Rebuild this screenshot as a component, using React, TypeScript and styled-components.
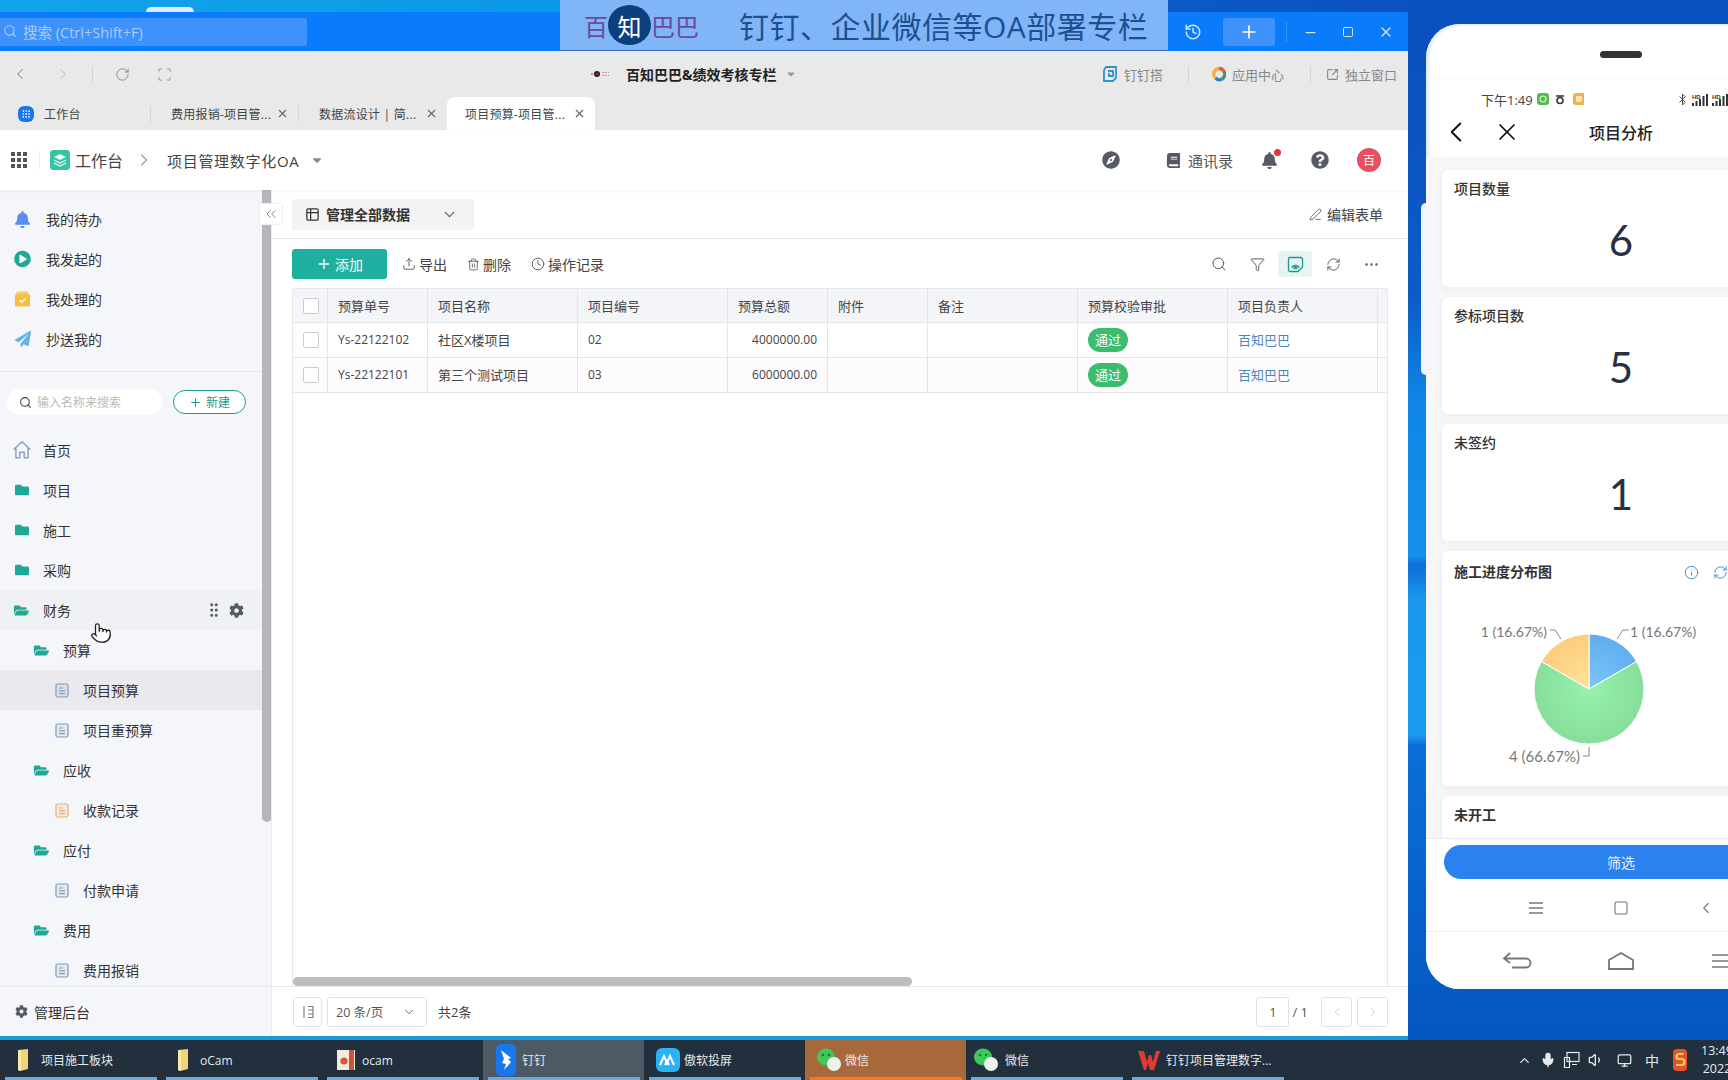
import React from "react";
import styled, { createGlobalStyle } from "styled-components";
import {
  ChevronLeft, ChevronRight, ChevronDown, ChevronsLeft, RotateCw, Scan, X, Minus, Square, Plus, History,
  Search, Table2, PenLine, Upload, Trash2, Clock, Filter, RefreshCw, MoreHorizontal, SquareArrowOutUpRight,
  Info, Mic, Volume1, Monitor, ChevronUp, Pointer, Grip, GripVertical, Bluetooth,
} from "lucide-react";
import { FaCog, FaBell, FaCompass, FaQuestionCircle, FaFolder, FaFolderOpen, FaPaperPlane, FaPlayCircle, FaCaretDown, FaBook } from "react-icons/fa";

const FONT = `"Open Sans", "Noto Sans CJK SC", sans-serif`;

const Global = createGlobalStyle`
  html, body { margin: 0; padding: 0; width: 1728px; height: 1080px; overflow: hidden; }
  * { box-sizing: border-box; }
  body { font-family: ${FONT}; color: #333; }
`;

const Page = styled.div`
  width: 1728px; height: 1080px; overflow: hidden; display: flex; flex-direction: column;
  background: linear-gradient(180deg, #0a4fbe 0, #0a5cc8 300px, #0f86e6 400px, #1590ea 555px, #0e6fd8 565px, #1a97ee 600px, #1a9bef 735px, #0a6fd8 745px, #0656c0 1040px);
`;
const Desktop = styled.div`height: 1040px; display: flex; position: relative; flex-shrink: 0;`;
const Window = styled.div`width: 1408px; height: 1040px; display: flex; flex-direction: column; flex-shrink: 0;`;
const WallStrip = styled.div`
  height: 12px; flex-shrink: 0; display: flex; align-items: flex-end; padding-left: 146px;
  background: linear-gradient(90deg, #12a4ea 0, #0a98e8 40%, #0a5ac6 83%, #0a52c0 100%);
`;
const WallTab = styled.div`width: 48px; height: 5px; background: #dfeefa; border-radius: 6px 6px 0 0;`;
const TitleBar = styled.div`height: 39px; flex-shrink: 0; background: #0a7bfb; display: flex; align-items: flex-start; padding-top: 6px; justify-content: space-between; padding-right: 3px;`;
const SearchBox = styled.div`
  width: 307px; height: 28px; background: #3f92fb; border-radius: 0 3px 3px 0; display: flex; align-items: center; gap: 6px;
  color: #a9cdfb; font-size: 14.5px; padding: 0 0 2px 3px;
`;
const Controls = styled.div`display: flex; align-items: center; height: 28px; color: #cfe4fe;`;
const CtrlCell = styled.div`width: 38px; height: 28px; display: flex; align-items: center; justify-content: center;`;
const PlusBox = styled.div`width: 52px; height: 28px; margin: 0 11px; background: #3f92fb; border-radius: 3px; display: flex; align-items: center; justify-content: center; color: #fff;`;
const CtrlDivider = styled.div`width: 1px; height: 20px; background: #3a94fb; margin-right: 4px;`;

const AddressBar = styled.div`height: 46px; flex-shrink: 0; background: #e9e9e9; display: flex; align-items: center; padding-right: 11px;`;
const NavCell = styled.div<{ $w: number; $faint?: boolean }>`width: ${(p) => p.$w}px; display: flex; justify-content: center; color: ${(p) => (p.$faint ? "#b9b9b9" : "#777")};`;
const VDivider = styled.div<{ $h?: number; $ml?: number; $mr?: number; $c?: string }>`
  width: 1px; height: ${(p) => p.$h ?? 16}px; background: ${(p) => p.$c ?? "#d4d4d4"}; margin-left: ${(p) => p.$ml ?? 0}px; margin-right: ${(p) => p.$mr ?? 0}px; flex-shrink: 0;
`;
const AddrTitle = styled.div`display: flex; align-items: center; margin-left: 406px; font-size: 14px; font-weight: 700; color: #222; width: 210px;`;
const OrgLogo = styled.svg`margin-right: 14px; flex-shrink: 0;`;
const AddrCaret = styled.span`color: #999; margin-left: 8px; display: flex;`;
const AddrRight = styled.div`margin-left: auto; display: flex; align-items: center; font-size: 13px; color: #888;`;
const AddrLink = styled.div`display: flex; align-items: center; gap: 6px;`;

const TabBar = styled.div`height: 33px; flex-shrink: 0; background: #e9e9e9; display: flex; align-items: center;`;
const Tab = styled.div<{ $w: number; $active?: boolean }>`
  width: ${(p) => p.$w}px; height: 33px; display: flex; align-items: center; justify-content: space-between;
  padding: 0 9px 0 ${(p) => (p.$active ? 18 : 20)}px; font-size: 12px; letter-spacing: .25px; color: #444; white-space: nowrap;
  ${(p) => (p.$active ? "background:#fff;border-radius:8px 8px 0 0;" : "")}
`;
const HomeTab = styled(Tab)`justify-content: flex-start; gap: 10px; padding-left: 18px;`;
const TabIcon = styled.span`width: 16px; height: 16px; border-radius: 6px; background: #1677ee; display: flex; align-items: center; justify-content: center; color: #fff;`;
const TabClose = styled.span`display: flex; color: #666;`;

const AppHeader = styled.div`height: 60px; flex-shrink: 0; background: #fff; display: flex; align-items: center; padding: 0 27px 0 11px; box-shadow: 0 1px 3px rgba(0,0,0,.05); position: relative; z-index: 1;`;
const GridIcon = styled.div`width: 16px; height: 16px; display: grid; grid-template-columns: repeat(3, 4px); gap: 2px; margin-right: 12px;`;
const GridDot = styled.span`background: #555; width: 4px; height: 4px;`;
const Crumb = styled.span<{ $size: number; $ml: number; $ls?: number }>`font-size: ${(p) => p.$size}px; margin-left: ${(p) => p.$ml}px; letter-spacing: ${(p) => p.$ls ?? 0}px; color: #444; white-space: nowrap;`;
const CrumbIcon = styled.span<{ $ml: number; $c?: string }>`display: flex; margin-left: ${(p) => p.$ml}px; color: ${(p) => p.$c ?? "#999"};`;
const HeadRight = styled.div`margin-left: auto; display: flex; align-items: center; color: #555a66;`;
const HeadItem = styled.span<{ $ml?: number }>`display: flex; align-items: center; margin-left: ${(p) => p.$ml ?? 0}px; position: relative;`;
const HeadText = styled.span`font-size: 15px; color: #555; margin-left: 7px;`;
const RedDot = styled.span`position: absolute; top: -3px; right: -3px; width: 7px; height: 7px; border-radius: 50%; background: #e5343a;`;
const Avatar = styled.div`width: 24px; height: 24px; border-radius: 50%; background: #e8505f; color: #fff; font-size: 12px; display: flex; align-items: center; justify-content: center; margin-left: 28px;`;

const Body = styled.div`height: 846px; flex-shrink: 0; display: flex; position: relative; background: #fff;`;
const BottomLine = styled.div`height: 4px; flex-shrink: 0; background: #189ad6;`;
const Sidebar = styled.div`width: 272px; flex-shrink: 0; background: #f4f6fa; display: flex; flex-direction: column; border-right: 1px solid #ececf0; position: relative;`;
const SideMain = styled.div`height: 796px; display: flex; overflow: hidden;`;
const SideContent = styled.div`width: 262px; flex-shrink: 0; padding-top: 9px; overflow: hidden;`;
const SideTrack = styled.div`width: 10px; flex-shrink: 0;`;
const SideThumb = styled.div`width: 10px; height: 632px; background: #b5b5ba; border-radius: 0 0 5px 5px;`;
const TopRow = styled.div`height: 40px; display: flex; align-items: center; font-size: 14px; color: #333; padding-left: 14px; gap: 15px;`;
const TopIconBox = styled.span<{ $c: string }>`width: 17px; height: 18px; display: flex; align-items: center; justify-content: center; color: ${(p) => p.$c};`;
const SideDivider = styled.div`height: 1px; background: #e6e8ec; margin-top: 12px;`;
const SideTools = styled.div`display: flex; align-items: center; height: 58px; padding: 2px 16px 0 7px;`;
const SideSearch = styled.div`width: 155px; height: 26px; border-radius: 13px; background: #fff; display: flex; align-items: center; gap: 5px; padding-left: 12px; font-size: 12px; color: #bbb; white-space: nowrap;`;
const NewBtn = styled.div`width: 73px; height: 24px; margin-left: 11px; border: 1px solid #1d9a8e; border-radius: 12px; background: #fff; color: #1d9a8e; font-size: 12px; display: flex; align-items: center; justify-content: center; gap: 4px;`;
const MenuRow = styled.div<{ $level: number; $on?: "soft" | "strong" }>`
  height: 40px; display: flex; align-items: center; font-size: 14px; color: #333;
  padding-left: ${(p) => 14 + p.$level * 20}px; padding-right: 18px;
  background: ${(p) => (p.$on === "strong" ? "#e9e9ee" : p.$on === "soft" ? "#eff1f5" : "transparent")};
`;
const MenuIcon = styled.span<{ $c: string }>`width: 15px; height: 16px; display: flex; align-items: center; justify-content: center; color: ${(p) => p.$c}; margin-right: 14px; flex-shrink: 0;`;
const RowTools = styled.span`margin-left: auto; display: flex; align-items: center; gap: 6px; color: #555a66;`;
const SideFoot = styled.div`height: 50px; border-top: 1px solid #e8eaee; display: flex; align-items: center; gap: 6px; padding: 0 0 0 15px; font-size: 14px; color: #333;`;
const CollapseBtn = styled.div`position: absolute; left: 259px; top: 13px; width: 24px; height: 22px; background: #fff; border: 1px solid #eceef2; border-radius: 3px; display: flex; align-items: center; justify-content: center; color: #666; z-index: 2;`;
const CursorMark = styled.div`position: absolute; left: 90px; top: 432px; color: #222; z-index: 3; display: flex;`;

const Main = styled.div`flex: 1; min-width: 0; display: flex; flex-direction: column;`;
const ContentTop = styled.div`height: 49px; flex-shrink: 0; border-bottom: 1px solid #e8e8e8; display: flex; align-items: center; justify-content: space-between; padding: 0 25px 0 20px;`;
const ViewSelect = styled.div`width: 182px; height: 31px; background: #f2f3f5; border-radius: 3px; display: flex; align-items: center; padding: 0 16px 0 13px; font-size: 14px; font-weight: 700; color: #333; gap: 6px;`;
const ViewChevron = styled.span`margin-left: auto; display: flex; color: #555; font-weight: 400;`;
const EditLink = styled.div`display: flex; align-items: center; gap: 5px; font-size: 14px; color: #444;`;
const Toolbar = styled.div`height: 49px; flex-shrink: 0; display: flex; align-items: center; padding: 1px 20px 0; font-size: 14px; color: #444;`;
const AddBtn = styled.div`width: 95px; height: 30px; border-radius: 3px; background: #1eb09f; color: #fff; display: flex; align-items: center; justify-content: center; gap: 3px; font-size: 14px; margin-right: 15px;`;
const ToolAction = styled.div`display: flex; align-items: center; gap: 3px; margin-right: 20px; white-space: nowrap;`;
const ToolRight = styled.div`margin-left: auto; display: flex; align-items: center; color: #555;`;
const ToolIcon = styled.div<{ $on?: boolean }>`width: 34px; height: 26px; margin-left: 4px; display: flex; align-items: center; justify-content: center; border-radius: 3px; ${(p) => (p.$on ? "background:#e6f5f3;color:#1d9a8e;" : "")}`;

const TableBox = styled.div`flex: 1; min-height: 0; margin: 0 20px; border: 1px solid #e6e7eb; border-bottom: 0; display: flex; flex-direction: column; border-radius: 2px 2px 0 0;`;
const TableGrow = styled.div`flex: 1;`;
const Row = styled.div<{ $head?: boolean; $tint?: boolean }>`
  display: grid; grid-template-columns: 35px 100px 150px 150px 100px 100px 150px 150px 150px 1fr;
  height: ${(p) => (p.$head ? 34 : 35)}px; border-bottom: 1px solid #e4e5ea;
  background: ${(p) => (p.$head ? "#f3f5f8" : p.$tint ? "#fdfbfd" : "#fff")};
`;
const Cell = styled.div<{ $right?: boolean; $num?: boolean }>`
  border-right: 1px solid #e4e5ea; display: flex; align-items: center; padding: 0 10px 1px; color: #444;
  font-size: ${(p) => (p.$num ? 12 : 13)}px; white-space: nowrap; justify-content: ${(p) => (p.$right ? "flex-end" : "flex-start")};
`;
const CheckCell = styled(Cell)`padding: 0 0 0 1px; justify-content: center;`;
const EndCell = styled(Cell)`border-right: 0; padding: 0;`;
const Check = styled.span`width: 16px; height: 16px; border: 1px solid #c9ccd2; border-radius: 2px; background: #fff;`;
const Badge = styled.span`width: 40px; height: 24px; border-radius: 12px; background: #3cbd6e; color: #fff; font-size: 13px; display: flex; align-items: center; justify-content: center;`;
const PersonLink = styled.span`color: #4a86c0;`;
const HScroll = styled.div`height: 9px; width: 619px; background: #bdbdc1; border-radius: 5px; flex-shrink: 0;`;
const Footer = styled.div`height: 50px; flex-shrink: 0; border-top: 1px solid #e8e8e8; display: flex; align-items: center; padding: 0 20px 0 21px; font-size: 13px; color: #444;`;
const PageBox = styled.div<{ $w: number; $ml?: number; $faint?: boolean }>`
  width: ${(p) => p.$w}px; height: 30px; border: 1px solid #dfe1e6; border-radius: 3px; margin-left: ${(p) => p.$ml ?? 0}px;
  display: flex; align-items: center; justify-content: center; color: ${(p) => (p.$faint ? "#bbb" : "#555")};
`;
const SizeSelect = styled(PageBox)`justify-content: space-between; padding: 0 10px 0 8px; font-size: 12.5px;`;
const Total = styled.span`margin-left: 11px;`;
const PagerRight = styled.div`margin-left: auto; display: flex; align-items: center;`;
const PagerTotal = styled.span`margin: 0 13px 0 3px; font-size: 13px; color: #555;`;

const Banner = styled.div`
  position: absolute; left: 560px; top: 0; width: 608px; height: 51px; background: #80b5f8; border-bottom: 1px solid #2f6cc0;
  display: flex; align-items: center; padding-left: 24px; font-size: 24px; color: #6b4a9a; z-index: 5;
`;
const BannerCircle = styled.span`width: 43px; height: 40px; border-radius: 50%; background: #0b3f7e; color: #fff; display: flex; align-items: center; justify-content: center;`;
const BannerTitle = styled.span`margin-left: 40px; font-size: 30px; color: #1e4f90; white-space: nowrap; letter-spacing: .5px;`;

const SideButton = styled.div`position: absolute; left: 1421px; top: 203px; width: 8px; height: 172px; background: #f2f5fb; border-radius: 5px 0 0 5px;`;
const Phone = styled.div`
  width: 390px; height: 965px; margin: 24px 0 0 18px; flex-shrink: 0; background: #fff; border-radius: 34px; overflow: hidden;
  display: flex; flex-direction: column; box-shadow: inset 4px 0 3px -1px #dfe9f8, inset 0 3px 2px -1px #e9f0fb; position: relative;
`;
const PhoneTop = styled.div`height: 55px; flex-shrink: 0; display: flex; justify-content: center; padding-top: 27px; border-bottom: 1px solid #f7f7f8;`;
const Speaker = styled.div`width: 42px; height: 7px; border-radius: 4px; background: #333;`;
const StatusBar = styled.div`height: 38px; flex-shrink: 0; display: flex; align-items: center; padding: 2px 0 0 55px; font-size: 13px; color: #444; white-space: nowrap;`;
const StatusGlyphs = styled.svg`margin-left: 3px; flex-shrink: 0;`;
const StatusRight = styled.div`margin-left: 92px; display: flex; align-items: center; gap: 3px; color: #333;`;
const SignalSvg = styled.svg`flex-shrink: 0;`;
const TitleRow = styled.div`height: 40px; flex-shrink: 0; display: flex; align-items: center; position: relative; padding: 0 0 10px 13px; color: #111;`;
const TitleBack = styled.span`display: flex; width: 54px;`;
const TitleText = styled.span`position: absolute; left: 0; right: 0; text-align: center; font-size: 16px; color: #222; font-weight: 500;`;
const PhoneBody = styled.div`flex: 1; min-height: 0; overflow: hidden; background: #f7f7fa; padding: 13px 16px 0; display: flex; flex-direction: column; gap: 10px;`;
const StatCard = styled.div`height: 117px; flex-shrink: 0; background: #fff; border-radius: 6px; padding: 11px 12px 4px; display: flex; flex-direction: column; box-shadow: 0 2px 8px rgba(30,30,60,.05);`;
const CardLabel = styled.div`font-size: 14px; line-height: 16px; color: #333; font-weight: 500;`;
const StatValue = styled.div`flex: 1; display: flex; align-items: center; justify-content: center; font-family: Lato, sans-serif; font-size: 42px; color: #2a3040;`;
const ChartCard = styled(StatCard)`height: 235px; padding: 12px 12px 0;`;
const ChartHead = styled.div`display: flex; align-items: center; height: 18px; color: #3a86c4;`;
const ChartTitle = styled(CardLabel)`width: 230px; flex-shrink: 0; font-weight: 700;`;
const ChartIcons = styled.span`display: flex; gap: 14px;`;
const ChartSvg = styled.svg`display: block; margin: 15px -12px 0; flex-shrink: 0;`;
const TailCard = styled(StatCard)`height: 60px;`;
const TailTitle = styled(CardLabel)`font-weight: 700;`;
const PhoneFoot = styled.div`height: 47px; flex-shrink: 0; background: #fff; border-top: 1px solid #eaeaee; padding: 6px 16px 0 18px;`;
const FilterBtn = styled.div`height: 34px; border-radius: 17px; background: #2b82ef; color: #e4f0ff; font-size: 14px; display: flex; align-items: center; justify-content: center; padding-right: 2px;`;
const NavRow = styled.div<{ $h: number; $border?: boolean }>`
  height: ${(p) => p.$h}px; flex-shrink: 0; display: flex; align-items: center; justify-content: center;
  background: #fff; color: #777; ${(p) => (p.$border ? "border-bottom:1px solid #eeeef0;" : "")}
`;
const NavSlot = styled.div<{ $w: number }>`width: ${(p) => p.$w}px; display: flex; justify-content: center;`;

const Taskbar = styled.div`height: 40px; flex-shrink: 0; background: #21303c; display: flex; color: #e6eaee; font-size: 12px; position: relative;`;
const TaskItem = styled.div<{ $bg?: string; $line?: string; $pad: number; $gap: number }>`
  width: 161px; height: 40px; display: flex; align-items: center; gap: ${(p) => p.$gap}px; padding-left: ${(p) => p.$pad}px; position: relative; white-space: nowrap; flex-shrink: 0;
  background: ${(p) => p.$bg ?? "transparent"};
  &::after { content: ""; position: absolute; left: 5px; right: 4px; bottom: 0; height: 3px; background: ${(p) => p.$line ?? "#6fa8d6"}; }
`;
const Tray = styled.div`margin-left: auto; display: flex; align-items: center; color: #e6eaee; font-size: 14px; white-space: nowrap; width: 240px; padding-left: 24px;`;
const TrayCell = styled.div<{ $w: number }>`width: ${(p) => p.$w}px; display: flex; justify-content: center; flex-shrink: 0;`;
const ClockBlock = styled.div`font-size: 12.5px; line-height: 18px; margin-left: 5px; text-align: center;`;
const TrayDate = styled.div`white-space: nowrap;`;

const FolderMini = ({ open }: { open?: boolean }) => (open ? <FaFolderOpen size={15} /> : <FaFolder size={14} />);
const DocIcon = ({ c }: { c: string }) => (
  <svg width="14" height="15" viewBox="0 0 14 15" fill="none" stroke={c} strokeWidth="1.2">
    <rect x="1" y="1" width="12" height="13" rx="1.5" fill={`${c}22`} />
    <path d="M4 5h4M4 7.8h6M4 10.6h6" />
  </svg>
);
const HomeIcon = () => (
  <svg width="20" height="20" viewBox="0 0 18 18" fill="none" stroke="#8aa0c4" strokeWidth="1.3" style={{ flexShrink: 0 }}>
    <path d="M1.5 8.5 9 1.5l7.5 7M3.5 7v9h3.5v-5h4v5h3.5V7" strokeLinejoin="round" />
  </svg>
);
const BoxIcon = () => (
  <svg width="18" height="18" viewBox="0 0 18 18">
    <rect x="2.5" y="1" width="13" height="4" rx="1.5" fill="#f5c978" />
    <rect x="1" y="4" width="16" height="13" rx="2" fill="#f6bf3f" />
    <path d="M6 10.2l2.2 2.2L12.3 8.4" stroke="#fff" strokeWidth="1.6" fill="none" />
  </svg>
);
const AppLogo = () => (
  <svg width="20" height="20" viewBox="0 0 20 20">
    <rect width="20" height="20" rx="3.5" fill="#35c3a3" />
    <path d="M10 4l6 3-6 3-6-3z" fill="#e9fbf6" />
    <path d="M4 10l6 3 6-3M4 13l6 3 6-3" stroke="#e9fbf6" fill="none" strokeWidth="1.3" />
  </svg>
);
const DingDa = () => (
  <svg width="16" height="18" viewBox="0 0 16 18" fill="none" stroke="#2f93c9" strokeWidth="1.8">
    <path d="M4 2h10v11l-3 3H2V5z" />
    <path d="M6 6h5v5H7V8" />
  </svg>
);
const ColorRing = () => (
  <svg width="14" height="16" viewBox="0 0 14 16" fill="none" strokeWidth="3.4">
    <path d="M7 2.5a5.5 5.5 0 0 1 5 3" stroke="#e25c4a" />
    <path d="M12 5.5a5.5 5.5 0 0 1 -2 7.5" stroke="#3d9a5c" />
    <path d="M10 13a5.5 5.5 0 0 1 -6.5 -1" stroke="#3a7bd5" />
    <path d="M3.5 12a5.5 5.5 0 0 1 3.5 -9.5" stroke="#f2b33d" />
  </svg>
);
const OrgMark = () => (
  <OrgLogo width="22" height="10" viewBox="0 0 22 10">
    <path d="M1 5h2" stroke="#d33" strokeWidth="1.2" />
    <circle cx="7" cy="5" r="3" fill="#222" />
    <circle cx="7" cy="5" r="1" fill="#d33" />
    <path d="M12 3.5h7M12 6.5h7" stroke="#e08a8a" strokeWidth="1.1" strokeDasharray="2 1" />
  </OrgLogo>
);
const DocEye = () => (
  <svg width="17" height="17" viewBox="0 0 17 17" fill="none" stroke="#1d9a8e" strokeWidth="1.3">
    <path d="M3 1.5h11a1.5 1.5 0 0 1 1.5 1.5v8l-4.5 4.5H3A1.5 1.5 0 0 1 1.5 14V3A1.5 1.5 0 0 1 3 1.5z" />
    <path d="M5 11c1.2-2 5.6-2 7 0-1.4 2-5.8 2-7 0z" />
    <circle cx="8.5" cy="11" r=".8" />
  </svg>
);
const ColumnToggle = () => (
  <svg width="12" height="14" viewBox="0 0 12 14" fill="none" stroke="#777" strokeWidth="1.1">
    <path d="M2 1v12M6 1.5h5v11H6M6 5h5M6 9h5" />
  </svg>
);
const YellowFolder = () => (
  <svg width="12" height="24" viewBox="0 0 12 24">
    <path d="M1 2l10 -1v20l-8 2-2-1z" fill="#f4d27a" />
    <path d="M1 2l3 1v20l-3-1z" fill="#fbe8ad" />
  </svg>
);
const OcamIcon = () => (
  <svg width="20" height="22" viewBox="0 0 20 22">
    <rect x="1" y="1" width="18" height="20" fill="#f4ead9" />
    <rect x="13" y="1" width="5" height="20" fill="#c9543b" />
    <circle cx="8" cy="12" r="3.6" fill="#d55a3c" />
  </svg>
);
const DingIcon = () => (
  <svg width="22" height="34" viewBox="0 0 22 34">
    <rect x="1" y="1" width="20" height="32" rx="5" fill="#1677ee" />
    <path d="M6 7l10 8-3 1 3 3-7 8 2-6-4-1 2-4z" fill="#fff" />
  </svg>
);
const AoIcon = () => (
  <svg width="24" height="24" viewBox="0 0 24 24">
    <rect width="24" height="24" rx="6" fill="#2ab2f5" />
    <path d="M4 17l4-9 3 7 3-7 4 9M9 17l2-4 2 4" stroke="#fff" strokeWidth="2" fill="none" />
  </svg>
);
const WeChatIcon = () => (
  <svg width="26" height="26" viewBox="0 0 26 26">
    <ellipse cx="10" cy="10" rx="9" ry="8.5" fill="#3fc85a" />
    <circle cx="18" cy="17" r="7" fill="#eef2ee" />
    <circle cx="7" cy="8" r="1.2" fill="#1c6d2e" /><circle cx="13" cy="8" r="1.2" fill="#1c6d2e" />
  </svg>
);
const WpsIcon = () => (
  <svg width="24" height="24" viewBox="0 0 24 24">
    <path d="M1 3h6l3 11 2-7h2l2 7 3-11h4l-6 19h-4l-2-7-2 7H7z" fill="#e23b33" />
  </svg>
);
const SogouIcon = () => (
  <svg width="14" height="22" viewBox="0 0 14 22">
    <rect x="0" y="0" width="14" height="22" rx="4" fill="#e8502f" />
    <path d="M10.5 5H6a2 2 0 0 0 0 5h2.5a2.5 2.5 0 0 1 0 6H3" stroke="#f4d05a" strokeWidth="2.2" fill="none" />
  </svg>
);
const NetIcon = () => (
  <svg width="18" height="18" viewBox="0 0 18 18" fill="none" stroke="#e6eaee" strokeWidth="1.2">
    <rect x="4" y="1.5" width="12" height="9" /><path d="M1.5 6.5h5v10h-5zM9 13.5h5" />
  </svg>
);
const BackArrow = () => (
  <svg width="30" height="20" viewBox="0 0 30 20" fill="none" stroke="#777" strokeWidth="1.8">
    <path d="M8 2 2 7.5 8 12M2 7.5h22a4.5 4.5 0 0 1 0 9H10" />
  </svg>
);
const HomePent = () => (
  <svg width="28" height="20" viewBox="0 0 28 20" fill="none" stroke="#777" strokeWidth="1.8">
    <path d="M2 9 14 2l12 7v9H2z" />
  </svg>
);
const Lines = ({ w, h }: { w: number; h: number }) => (
  <svg width={w} height={h} viewBox={`0 0 ${w} ${h}`} stroke="#777" strokeWidth="1.6">
    <path d={`M0 1h${w}M0 ${h / 2}h${w}M0 ${h - 1}h${w}`} />
  </svg>
);
const StatusTrio = () => (
  <StatusGlyphs width="48" height="14" viewBox="0 0 48 14">
    <rect x="1" y="1" width="12" height="12" rx="3" fill="#55b94f" />
    <circle cx="7" cy="7" r="3" fill="none" stroke="#dff5dc" strokeWidth="1.2" />
    <path d="M20 4h8" stroke="#333" strokeWidth="1.4" />
    <circle cx="24" cy="8.5" r="3" fill="none" stroke="#333" strokeWidth="1.6" />
    <rect x="37" y="1" width="12" height="12" rx="3" fill="#edb14f" />
    <rect x="40" y="4" width="6" height="6" rx="1" fill="#fbe5b8" />
  </StatusGlyphs>
);
const Signal = () => (
  <SignalSvg width="17" height="13" viewBox="0 0 17 13" fill="#333">
    <text x="0" y="5.5" fontSize="6" fontWeight="700" fontFamily="Liberation Sans, sans-serif">HD</text>
    <rect x="0" y="10" width="2" height="3" />
    <rect x="3.5" y="8" width="2" height="5" />
    <rect x="7" y="6" width="2" height="7" />
    <rect x="10.5" y="3" width="2" height="10" />
    <rect x="14" y="1" width="2" height="12" />
  </SignalSvg>
);

const Pie = () => (
  <ChartSvg width="358" height="190" viewBox="1442 596 358 190">
    <defs>
      <radialGradient id="gB" gradientUnits="userSpaceOnUse" cx="1589" cy="689" r="55"><stop offset="0" stopColor="#7cc4fb" /><stop offset="1" stopColor="#62aeee" /></radialGradient>
      <radialGradient id="gG" gradientUnits="userSpaceOnUse" cx="1589" cy="689" r="55"><stop offset="0" stopColor="#96f2ae" /><stop offset="1" stopColor="#86de9a" /></radialGradient>
      <radialGradient id="gO" gradientUnits="userSpaceOnUse" cx="1589" cy="689" r="55"><stop offset="0" stopColor="#ffe39a" /><stop offset="1" stopColor="#fdcc7c" /></radialGradient>
    </defs>
    <path d="M1589 689V634A55 55 0 0 1 1636.6 661.5Z" fill="url(#gB)" stroke="#fff" />
    <path d="M1589 689L1636.6 661.5A55 55 0 1 1 1541.4 661.5Z" fill="url(#gG)" stroke="#fff" />
    <path d="M1589 689L1541.4 661.5A55 55 0 0 1 1589 634Z" fill="url(#gO)" stroke="#fff" />
    <g fill="none" stroke="#888">
      <path d="M1617 639l6-9h6" /><path d="M1561 639l-6-9h-5" /><path d="M1589 747v9h-6" />
    </g>
    <g fontSize="14" fill="#777" fontFamily="Lato, sans-serif">
      <text x="1630" y="637">1 (16.67%)</text>
      <text x="1547" y="637" textAnchor="end">1 (16.67%)</text>
      <text x="1580" y="762" textAnchor="end" fontSize="15">4 (66.67%)</text>
    </g>
  </ChartSvg>
);

const cols = ["预算单号", "项目名称", "项目编号", "预算总额", "附件", "备注", "预算校验审批", "项目负责人"];
const rows = [
  ["Ys-22122102", "社区X楼项目", "02", "4000000.00"],
  ["Ys-22122101", "第三个测试项目", "03", "6000000.00"],
];

const menu: { t: string; l: number; k: "home" | "folder" | "open" | "doc" | "docO"; on?: "soft" | "strong" }[] = [
  { t: "首页", l: 0, k: "home" },
  { t: "项目", l: 0, k: "folder" },
  { t: "施工", l: 0, k: "folder" },
  { t: "采购", l: 0, k: "folder" },
  { t: "财务", l: 0, k: "open", on: "soft" },
  { t: "预算", l: 1, k: "open" },
  { t: "项目预算", l: 2, k: "doc", on: "strong" },
  { t: "项目重预算", l: 2, k: "doc" },
  { t: "应收", l: 1, k: "open" },
  { t: "收款记录", l: 2, k: "docO" },
  { t: "应付", l: 1, k: "open" },
  { t: "付款申请", l: 2, k: "doc" },
  { t: "费用", l: 1, k: "open" },
  { t: "费用报销", l: 2, k: "doc" },
];

const iconFor = (k: string) => {
  if (k === "home") return <HomeIcon />;
  if (k === "folder") return <FolderMini />;
  if (k === "open") return <FolderMini open />;
  if (k === "doc") return <DocIcon c="#7d9cc4" />;
  return <DocIcon c="#eeaa6b" />;
};

const taskItems = [
  { t: "项目施工板块", i: <YellowFolder />, pad: 17, gap: 12 },
  { t: "oCam", i: <YellowFolder />, pad: 16, gap: 11 },
  { t: "ocam", i: <OcamIcon />, pad: 14, gap: 6 },
  { t: "钉钉", i: <DingIcon />, bg: "#4d5a66", pad: 12, gap: 5 },
  { t: "傲软投屏", i: <AoIcon />, pad: 12, gap: 4 },
  { t: "微信", i: <WeChatIcon />, bg: "#a8693a", line: "#f47a1c", pad: 11, gap: 3 },
  { t: "微信", i: <WeChatIcon />, pad: 7, gap: 6 },
  { t: "钉钉项目管理数字...", i: <WpsIcon />, pad: 10, gap: 5 },
];

export default function App() {
  return (
    <Page>
      <Global />
      <Desktop>
        <Window>
          <WallStrip><WallTab /></WallStrip>
          <TitleBar>
            <SearchBox><Search size={14} />搜索 (Ctrl+Shift+F)</SearchBox>
            <Controls>
              <CtrlCell><History size={18} /></CtrlCell>
              <PlusBox><Plus size={20} /></PlusBox>
              <CtrlDivider />
              <CtrlCell><Minus size={15} /></CtrlCell>
              <CtrlCell><Square size={12} /></CtrlCell>
              <CtrlCell><X size={16} /></CtrlCell>
            </Controls>
          </TitleBar>
          <AddressBar>
            <NavCell $w={40}><ChevronLeft size={18} strokeWidth={1.3} /></NavCell>
            <NavCell $w={46} $faint><ChevronRight size={18} strokeWidth={1.3} /></NavCell>
            <VDivider $ml={6} $mr={7} />
            <NavCell $w={44}><RotateCw size={15} strokeWidth={1.3} /></NavCell>
            <NavCell $w={40}><Scan size={15} strokeWidth={1.3} /></NavCell>
            <AddrTitle>
              <OrgMark />
              百知巴巴&绩效考核专栏
              <AddrCaret><FaCaretDown size={12} /></AddrCaret>
            </AddrTitle>
            <AddrRight>
              <AddrLink><DingDa />钉钉搭</AddrLink>
              <VDivider $ml={25} $mr={23} />
              <AddrLink><ColorRing />应用中心</AddrLink>
              <VDivider $ml={26} $mr={15} />
              <AddrLink><SquareArrowOutUpRight size={13} />独立窗口</AddrLink>
            </AddrRight>
          </AddressBar>
          <TabBar>
            <HomeTab $w={150}>
              <TabIcon><Grip size={10} /></TabIcon>工作台
            </HomeTab>
            <VDivider />
            <Tab $w={147}>费用报销-项目管...<TabClose><X size={13} /></TabClose></Tab>
            <VDivider />
            <Tab $w={148}>数据流设计 | 简...<TabClose><X size={13} /></TabClose></Tab>
            <Tab $w={148} $active>项目预算-项目管...<TabClose><X size={13} /></TabClose></Tab>
          </TabBar>
          <AppHeader>
            <GridIcon>{Array.from({ length: 9 }).map((_, i) => <GridDot key={i} />)}</GridIcon>
            <VDivider $h={18} $c="#eee" $mr={10} />
            <AppLogo />
            <Crumb $size={16} $ml={5}>工作台</Crumb>
            <CrumbIcon $ml={11}><ChevronRight size={20} strokeWidth={1.3} /></CrumbIcon>
            <Crumb $size={15} $ml={13} $ls={0.7}>项目管理数字化OA</Crumb>
            <CrumbIcon $ml={11} $c="#888"><FaCaretDown size={14} /></CrumbIcon>
            <HeadRight>
              <HeadItem><FaCompass size={18} /></HeadItem>
              <HeadItem $ml={46}><FaBook size={15} /><HeadText>通讯录</HeadText></HeadItem>
              <HeadItem $ml={28}><FaBell size={17} /><RedDot /></HeadItem>
              <HeadItem $ml={33}><FaQuestionCircle size={18} /></HeadItem>
              <Avatar>百</Avatar>
            </HeadRight>
          </AppHeader>
          <Body>
            <Sidebar>
              <SideMain>
                <SideContent>
                  <TopRow><TopIconBox $c="#5b8cf2"><FaBell size={17} /></TopIconBox>我的待办</TopRow>
                  <TopRow><TopIconBox $c="#1fa896"><FaPlayCircle size={18} /></TopIconBox>我发起的</TopRow>
                  <TopRow><TopIconBox $c="#f6bf3f"><BoxIcon /></TopIconBox>我处理的</TopRow>
                  <TopRow><TopIconBox $c="#62b3e8"><FaPaperPlane size={16} /></TopIconBox>抄送我的</TopRow>
                  <SideDivider />
                  <SideTools>
                    <SideSearch><Search size={13} color="#444" />输入名称来搜索</SideSearch>
                    <NewBtn><Plus size={13} />新建</NewBtn>
                  </SideTools>
                  {menu.map((m) => (
                    <MenuRow key={m.t} $level={m.l} $on={m.on}>
                      <MenuIcon $c="#1fa896">{iconFor(m.k)}</MenuIcon>
                      {m.t}
                      {m.t === "财务" && (
                        <RowTools>
                          <GripVertical size={18} />
                          <FaCog size={15} />
                        </RowTools>
                      )}
                    </MenuRow>
                  ))}
                </SideContent>
                <SideTrack><SideThumb /></SideTrack>
              </SideMain>
              <SideFoot><FaCog size={13} color="#555a66" />管理后台</SideFoot>
              <CursorMark><Pointer size={22} strokeWidth={1.4} fill="#fff" /></CursorMark>
            </Sidebar>
            <CollapseBtn><ChevronsLeft size={16} strokeWidth={1.2} /></CollapseBtn>
            <Main>
              <ContentTop>
                <ViewSelect>
                  <Table2 size={15} />管理全部数据
                  <ViewChevron><ChevronDown size={17} strokeWidth={1.5} /></ViewChevron>
                </ViewSelect>
                <EditLink><PenLine size={13} strokeWidth={1.4} />编辑表单</EditLink>
              </ContentTop>
              <Toolbar>
                <AddBtn><Plus size={16} />添加</AddBtn>
                <ToolAction><Upload size={14} strokeWidth={1.4} />导出</ToolAction>
                <ToolAction><Trash2 size={13} strokeWidth={1.4} />删除</ToolAction>
                <ToolAction><Clock size={14} strokeWidth={1.4} />操作记录</ToolAction>
                <ToolRight>
                  <ToolIcon><Search size={16} strokeWidth={1.5} /></ToolIcon>
                  <ToolIcon><Filter size={15} strokeWidth={1.5} /></ToolIcon>
                  <ToolIcon $on><DocEye /></ToolIcon>
                  <ToolIcon><RefreshCw size={15} strokeWidth={1.5} /></ToolIcon>
                  <ToolIcon><MoreHorizontal size={17} strokeWidth={1.5} /></ToolIcon>
                </ToolRight>
              </Toolbar>
              <TableBox>
                <Row $head>
                  <CheckCell><Check /></CheckCell>
                  {cols.map((c) => <Cell key={c}>{c}</Cell>)}
                  <EndCell />
                </Row>
                {rows.map((r, i) => (
                  <Row key={r[0]} $tint={i === 1}>
                    <CheckCell><Check /></CheckCell>
                    <Cell $num>{r[0]}</Cell>
                    <Cell>{r[1]}</Cell>
                    <Cell $num>{r[2]}</Cell>
                    <Cell $num $right>{r[3]}</Cell>
                    <Cell />
                    <Cell />
                    <Cell><Badge>通过</Badge></Cell>
                    <Cell><PersonLink>百知巴巴</PersonLink></Cell>
                    <EndCell />
                  </Row>
                ))}
                <TableGrow />
                <HScroll />
              </TableBox>
              <Footer>
                <PageBox $w={29}><ColumnToggle /></PageBox>
                <SizeSelect $w={100} $ml={5}>20 条/页<ChevronDown size={14} strokeWidth={1.5} /></SizeSelect>
                <Total>共2条</Total>
                <PagerRight>
                  <PageBox $w={33}>1</PageBox>
                  <PagerTotal>/ 1</PagerTotal>
                  <PageBox $w={31} $faint><ChevronLeft size={14} strokeWidth={1.3} /></PageBox>
                  <PageBox $w={31} $ml={5} $faint><ChevronRight size={14} strokeWidth={1.3} /></PageBox>
                </PagerRight>
              </Footer>
            </Main>
          </Body>
          <BottomLine />
        </Window>
        <SideButton />
        <Phone>
          <PhoneTop><Speaker /></PhoneTop>
          <StatusBar>
            下午1:49
            <StatusTrio />
            <StatusRight>
              <Bluetooth size={13} strokeWidth={1.6} />
              <Signal />
              <Signal />
            </StatusRight>
          </StatusBar>
          <TitleRow>
            <TitleBack><ChevronLeft size={34} strokeWidth={1.4} /></TitleBack>
            <X size={28} strokeWidth={1.5} />
            <TitleText>项目分析</TitleText>
          </TitleRow>
          <PhoneBody>
            <StatCard><CardLabel>项目数量</CardLabel><StatValue>6</StatValue></StatCard>
            <StatCard><CardLabel>参标项目数</CardLabel><StatValue>5</StatValue></StatCard>
            <StatCard><CardLabel>未签约</CardLabel><StatValue>1</StatValue></StatCard>
            <ChartCard>
              <ChartHead>
                <ChartTitle>施工进度分布图</ChartTitle>
                <ChartIcons><Info size={15} strokeWidth={1.5} /><RefreshCw size={15} strokeWidth={1.5} /></ChartIcons>
              </ChartHead>
              <Pie />
            </ChartCard>
            <TailCard><TailTitle>未开工</TailTitle></TailCard>
          </PhoneBody>
          <PhoneFoot><FilterBtn>筛选</FilterBtn></PhoneFoot>
          <NavRow $h={47} $border>
            <NavSlot $w={85}><Lines w={14} h={12} /></NavSlot>
            <NavSlot $w={85}><Square size={16} strokeWidth={1.6} /></NavSlot>
            <NavSlot $w={85}><ChevronLeft size={18} strokeWidth={1.5} /></NavSlot>
          </NavRow>
          <NavRow $h={57}>
            <NavSlot $w={104}><BackArrow /></NavSlot>
            <NavSlot $w={104}><HomePent /></NavSlot>
            <NavSlot $w={104}><Lines w={26} h={14} /></NavSlot>
          </NavRow>
        </Phone>
        <Banner>
          百<BannerCircle>知</BannerCircle>巴巴
          <BannerTitle>钉钉、企业微信等OA部署专栏</BannerTitle>
        </Banner>
      </Desktop>
      <Taskbar>
        {taskItems.map((t, i) => (
          <TaskItem key={i} $bg={t.bg} $line={t.line} $pad={t.pad} $gap={t.gap}>
            {t.i}
            {t.t}
          </TaskItem>
        ))}
        <Tray>
          <TrayCell $w={24}><ChevronUp size={15} /></TrayCell>
          <TrayCell $w={24}><Mic size={16} fill="#e6eaee" /></TrayCell>
          <TrayCell $w={24}><NetIcon /></TrayCell>
          <TrayCell $w={24}><Volume1 size={16} /></TrayCell>
          <TrayCell $w={32}><Monitor size={15} /></TrayCell>
          <TrayCell $w={24}>中</TrayCell>
          <TrayCell $w={32}><SogouIcon /></TrayCell>
          <ClockBlock>
            <TrayDate>13:49</TrayDate>
            <TrayDate>2022</TrayDate>
          </ClockBlock>
        </Tray>
      </Taskbar>
    </Page>
  );
}
